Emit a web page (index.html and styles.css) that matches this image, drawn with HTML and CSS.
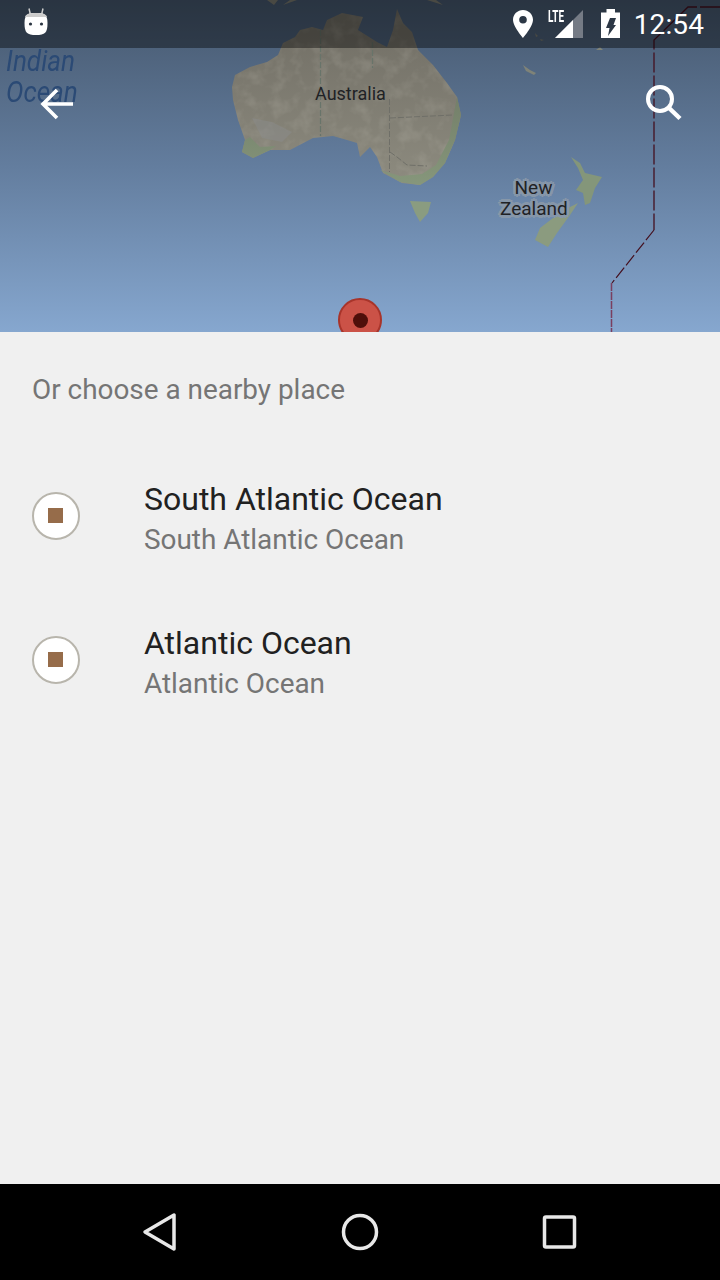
FILE: index.html
```html
<!DOCTYPE html>
<html lang="en">
<head>
	<meta charset="UTF-8">
	<title>Choose a place</title>
	<link rel="stylesheet" href="styles.css">
</head>

<body>
<div class="screen">
	<div class="map">
		<svg class="map-art" width="720" height="332" viewBox="0 0 720 332">
			<defs>
				<linearGradient id="sea" x1="0" y1="0" x2="0" y2="1">
					<stop offset="0" stop-color="#46586e"/>
					<stop offset="0.5" stop-color="#637d9e"/>
					<stop offset="1" stop-color="#86a7cf"/>
				</linearGradient>
				<linearGradient id="land" gradientUnits="userSpaceOnUse" x1="0" y1="0" x2="0" y2="190">
					<stop offset="0" stop-color="#6e6b62"/>
					<stop offset="1" stop-color="#8e8c80"/>
				</linearGradient>
				<linearGradient id="green" gradientUnits="userSpaceOnUse" x1="0" y1="90" x2="0" y2="190">
					<stop offset="0" stop-color="#727d68"/>
					<stop offset="1" stop-color="#87987c"/>
				</linearGradient>
				<filter id="mottle" x="0" y="0" width="100%" height="100%">
					<feTurbulence type="fractalNoise" baseFrequency="0.07" numOctaves="3" seed="4"/>
					<feColorMatrix values="0 0 0 0 0.68  0 0 0 0 0.66  0 0 0 0 0.58  2.6 0 0 0 -1.15"/>
					<feComposite in2="SourceGraphic" operator="in"/>
				</filter>
			</defs>
			<rect width="720" height="332" fill="url(#sea)"/>
			<!-- australia -->
			<path fill="url(#land)" d="M232 87 L235 75 L250 67 L267 62 L278 55 L283 43 L295 37 L300 30 L312 27 L323 30 L327 20 L342 13 L363 17 L358 30 L377 42 L387 47 L393 30 L397 9 L403 23 L412 32 L418 50 L433 65 L447 83 L457 97 L461 115 L455 140 L445 163 L433 177 L420 185 L402 183 L383 173 L377 157 L370 147 L360 157 L357 143 L347 140 L333 136 L313 138 L290 150 L270 150 L253 158 L242 152 L245 140 L238 120 L233 100 Z"/>
			<path fill="#fff" opacity="0.14" filter="url(#mottle)" d="M232 87 L235 75 L250 67 L267 62 L278 55 L283 43 L295 37 L300 30 L312 27 L323 30 L327 20 L342 13 L363 17 L358 30 L377 42 L387 47 L393 30 L397 9 L403 23 L412 32 L418 50 L433 65 L447 83 L457 97 L461 115 L455 140 L445 163 L433 177 L420 185 L402 183 L383 173 L377 157 L370 147 L360 157 L357 143 L347 140 L333 136 L313 138 L290 150 L270 150 L253 158 L242 152 L245 140 L238 120 L233 100 Z"/>
			<path fill="url(#green)" d="M380 170 L400 182 L420 185 L433 177 L445 163 L455 140 L461 115 L457 97 L454 113 L449 140 L436 165 L422 174 L400 176 Z"/>
			<path fill="url(#green)" d="M242 152 L253 158 L270 150 L276 146 L260 147 L250 137 L245 140 Z"/>
			<path fill="#8d8f92" opacity="0.4" d="M252 118 L272 122 L292 132 L282 142 L262 138 Z"/>
			<path fill="none" stroke="#68746a" stroke-width="1.200" stroke-dasharray="6 2" d="M320.500 30 V136 M372.500 42 V68"/>
			<path fill="none" stroke="#6f6f68" stroke-dasharray="6 2" d="M389.500 99 V172 M390 118 L453 115 M390 152 L397 157 L407 165 L427 166"/>
			<!-- tasmania -->
			<path fill="#8a9c80" d="M410 201 L431 202 L428 213 L420 222 L415 213 Z"/>
			<!-- new zealand -->
			<path fill="#84967a" d="M571 157 L580 163 L585 173 L602 177 L595 188 L590 203 L585 205 L583 193 L576 190 L583 180 L578 168 Z"/>
			<path fill="#8b9b7f" d="M578 203 L570 215 L557 233 L548 247 L535 240 L540 228 L553 218 L568 208 Z"/>
			<!-- small islands -->
			<path fill="#7f8378" d="M523 65 L530 70 L536 73 L534 75 L526 71 Z"/>
			<path fill="#7f8378" d="M596 50 L600 47 L603 50 Z"/>
			<path fill="#7a7a70" d="M267 0 L274 5 L278 0 Z M283 5 L290 0 L297 0 Z M427 0 L443 5 L436 0 Z M535 33 L538 36 L536 37 Z M540 39 L544 40 L541 41 Z"/>
			<!-- date line -->
			<path fill="none" stroke="#44101f" stroke-width="1.300" stroke-dasharray="20 3" d="M720 7 H688 L654 40 V230"/>
			<path fill="none" stroke="#44101f" stroke-width="1.200" stroke-dasharray="13 3" d="M654 230 L612 283"/>
			<path fill="none" stroke="#7a3f5f" stroke-width="1.500" stroke-dasharray="8 1" d="M611.500 283 V332"/>
		</svg>
		<p class="map-label ocean">Indian<br>Ocean</p>
		<p class="map-label australia">Australia</p>
		<p class="map-label zealand">New<br>Zealand</p>
		<div class="pin"><span></span></div>

		<div class="status-bar">
			<svg class="bot" width="26" height="28" viewBox="0 0 26 28">
				<path fill="none" stroke="#ccc" stroke-width="1.500" d="M6 0.500 L7.500 7 M20 0.500 L18.500 7"/>
				<path fill="#fff" d="M13 5 C21 5 24.500 6 24.500 15 C24.500 25 22 27 13 27 C4 27 1.500 25 1.500 15 C1.500 6 5 5 13 5 Z"/>
				<path fill="#ccc" d="M13 5 C19 5 23 5.500 24 9 H2 C3 5.500 7 5 13 5 Z"/>
				<circle cx="7.500" cy="16" r="1.600" fill="#2a3441"/>
				<circle cx="18.500" cy="16" r="1.600" fill="#2a3441"/>
			</svg>
			<div class="status-right">
				<svg class="status-pin" width="20" height="28" viewBox="0 0 20 28">
					<path fill="#fff" fill-rule="evenodd" d="M10 0 C4.500 0 0 4.300 0 9.800 C0 16.500 10 28 10 28 C10 28 20 16.500 20 9.800 C20 4.300 15.500 0 10 0 Z M10 6 A3.800 3.800 0 1 1 10 13.600 A3.800 3.800 0 1 1 10 6 Z"/>
				</svg>
				<div class="signal">
					<span class="lte">LTE</span>
					<svg width="28" height="28" viewBox="0 0 28 28">
						<path fill="#757b85" d="M28 0 V28 H0 Z"/>
						<path fill="#fff" d="M18 10 V28 H0 Z"/>
					</svg>
				</div>
				<svg class="battery" width="19" height="29" viewBox="0 0 19 29">
					<path fill="#fff" fill-rule="evenodd" d="M5.500 0 H14 V3.500 H19 V29 H0 V3.500 H5.500 Z M9 9 H15 L12.500 16 H15 L7 27 L8.500 19 H5 Z"/>
				</svg>
				<span class="clock">12:54</span>
			</div>
		</div>

		<div class="toolbar">
			<svg class="back-icon" width="36" height="32" viewBox="0 0 36 32">
				<path fill="none" stroke="#fff" stroke-width="3.600" d="M34 16 H4 M18 2 L4 16 L18 30"/>
			</svg>
			<svg width="36" height="36" viewBox="0 0 36 36">
				<circle cx="14" cy="14" r="12" fill="none" stroke="#fff" stroke-width="4"/>
				<path stroke="#fff" stroke-width="4.500" d="M22 22 L34 33.500"/>
			</svg>
		</div>
	</div>

	<div class="panel">
		<p class="hint">Or choose a nearby place</p>
		<ul class="places">
			<li class="place">
				<div class="place-icon"><span></span></div>
				<div class="place-text">
					<p class="place-name">South Atlantic Ocean</p>
					<p class="place-sub">South Atlantic Ocean</p>
				</div>
			</li>
			<li class="place">
				<div class="place-icon"><span></span></div>
				<div class="place-text">
					<p class="place-name">Atlantic Ocean</p>
					<p class="place-sub">Atlantic Ocean</p>
				</div>
			</li>
		</ul>
	</div>

	<div class="nav-bar">
		<svg width="36" height="40" viewBox="0 0 36 40">
			<path fill="none" stroke="#e8e8e8" stroke-width="3.500" stroke-linejoin="round" d="M32 3 V37 L3 20 Z"/>
		</svg>
		<svg width="40" height="40" viewBox="0 0 40 40">
			<circle cx="20" cy="20" r="16.500" fill="none" stroke="#e8e8e8" stroke-width="3.500"/>
		</svg>
		<svg width="36" height="36" viewBox="0 0 36 36">
			<rect x="2.500" y="3" width="30" height="30" rx="1.500" fill="none" stroke="#e8e8e8" stroke-width="3.500"/>
		</svg>
	</div>
</div>
</body>
</html>
```

FILE: styles.css
```css
html, body {
	margin: 0;
	padding: 0;
	background: #F0F0F0;
}
p, ul {
	margin: 0;
	padding: 0;
}
.screen {
	width: 720px;
	height: 1280px;
	display: flex;
	flex-direction: column;
	overflow: hidden;
	font-family: Roboto, "Liberation Sans", sans-serif;
}

/* map */
.map {
	position: relative;
	height: 332px;
	flex: none;
	overflow: hidden;
}
.map-art {
	position: absolute;
	left: 0;
	top: 0;
}
.map-label {
	position: absolute;
	color: #1f2225;
	font-size: 20px;
	line-height: 22px;
	text-align: center;
}
.ocean {
	left: 6px;
	top: 46px;
	color: #2b4a75;
	font-size: 29px;
	line-height: 31px;
	font-style: italic;
	text-align: left;
	transform: scaleX(0.9);
	transform-origin: left top;
}
.australia {
	left: 315px;
	top: 83px;
	font-size: 18px;
}
.zealand {
	left: 500px;
	top: 177px;
	width: 67px;
	font-size: 19px;
	line-height: 21px;
	text-shadow: -3px 0 #8797a9, 3px 0 #8797a9, 0 -3px #8797a9, 0 3px #8797a9, -2px -2px #8797a9, 2px 2px #8797a9, -2px 2px #8797a9, 2px -2px #8797a9;
}
.pin {
	position: absolute;
	left: 338px;
	top: 298px;
	width: 44px;
	height: 44px;
	box-sizing: border-box;
	border: 2px solid #a8342a;
	border-radius: 50%;
	background: #cb5247;
	display: flex;
	align-items: center;
	justify-content: center;
}
.pin span {
	width: 15px;
	height: 15px;
	border-radius: 50%;
	background: #4f0f0a;
}

/* status bar */
.status-bar {
	position: absolute;
	left: 0;
	top: 0;
	width: 720px;
	height: 48px;
	box-sizing: border-box;
	padding: 8px 16px 0 23px;
	display: flex;
	justify-content: space-between;
	background: rgba(0, 0, 0, 0.4);
}
.status-right {
	display: flex;
	align-items: flex-start;
}
.status-pin {
	margin-top: 2px;
}
.signal {
	position: relative;
	width: 35px;
	height: 28px;
	margin: 2px 0 0 15px;
	display: flex;
	justify-content: flex-end;
}
.lte {
	position: absolute;
	left: 0;
	top: 0;
	color: #fff;
	font-size: 16px;
	font-weight: 700;
	line-height: 14px;
	transform: scaleX(0.62);
	transform-origin: left top;
}
.battery {
	margin: 1px 0 0 18px;
}
.clock {
	margin-left: 14px;
	color: #fff;
	font-size: 28px;
	line-height: 33px;
	letter-spacing: 0.1px;
}

/* toolbar */
.toolbar {
	position: absolute;
	left: 0;
	top: 48px;
	width: 720px;
	box-sizing: border-box;
	padding: 37px 38px 0 39px;
	display: flex;
	justify-content: space-between;
	align-items: flex-start;
}
.back-icon {
	margin-top: 3px;
}

/* list */
.panel {
	flex: 1;
	background: #F0F0F0;
}
.hint {
	padding: 42px 32px 0;
	color: #757575;
	font-size: 27.900px;
	line-height: 32px;
}
.places {
	list-style: none;
	margin-top: 38px;
}
.place {
	display: flex;
	align-items: center;
	height: 144px;
	padding-left: 32px;
}
.place-icon {
	width: 48px;
	height: 48px;
	box-sizing: border-box;
	border: 2.500px solid #b8b5ac;
	border-radius: 50%;
	background: #fff;
	display: flex;
	align-items: center;
	justify-content: center;
}
.place-icon span {
	width: 15px;
	height: 15px;
	margin: 0 1px 1px 0;
	background: #966c4a;
}
.place-text {
	margin-left: 64px;
	padding-top: 3px;
}
.place-name {
	color: #212121;
	font-size: 32px;
	line-height: 38px;
}
.place-sub {
	margin-top: 6px;
	color: #757575;
	font-size: 27.900px;
	line-height: 32px;
}

/* nav */
.nav-bar {
	height: 96px;
	flex: none;
	box-sizing: border-box;
	padding: 0 142px;
	display: flex;
	align-items: center;
	justify-content: space-between;
	background: #000;
}
```
